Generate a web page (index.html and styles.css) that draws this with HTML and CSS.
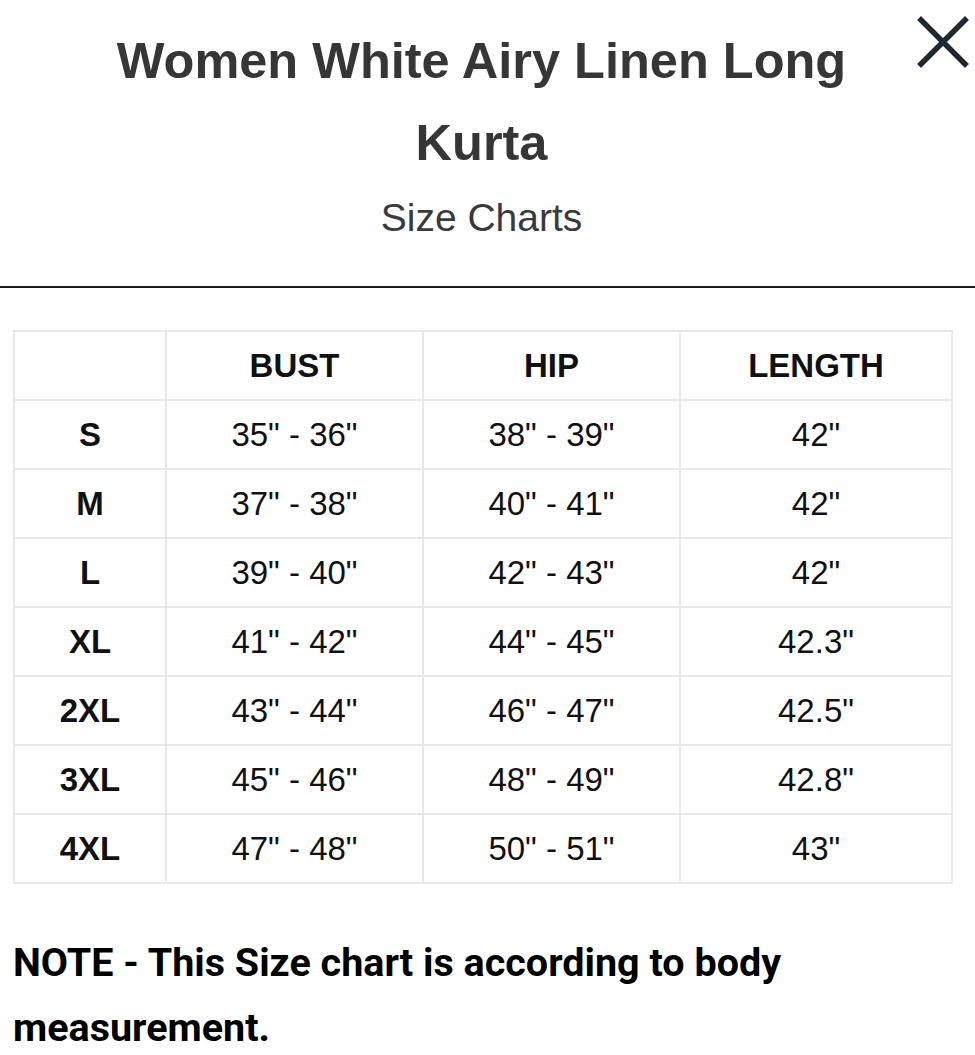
FILE: index.html
```html
<!DOCTYPE html>
<html lang="en">
<head>
<meta charset="utf-8">
<title>Size Charts</title>
<link rel="stylesheet" href="styles.css">
</head>
<body>
<div class="modal">
  <header class="head">
    <h1 class="title">Women White Airy Linen Long Kurta</h1>
    <p class="subtitle">Size Charts</p>
    <button class="close" aria-label="Close">
      <svg viewBox="0 0 52 52" width="52" height="52"><path d="M4 4 L48 48 M48 4 L4 48" stroke="#1f2830" stroke-width="5.5" stroke-linecap="square" fill="none"/></svg>
    </button>
  </header>
  <div class="divider"></div>
  <main class="content">
    <table class="chart">
      <thead>
        <tr><th></th><th>BUST</th><th>HIP</th><th>LENGTH</th></tr>
      </thead>
      <tbody>
        <tr><th>S</th><td>35" - 36"</td><td>38" - 39"</td><td>42"</td></tr>
        <tr><th>M</th><td>37" - 38"</td><td>40" - 41"</td><td>42"</td></tr>
        <tr><th>L</th><td>39" - 40"</td><td>42" - 43"</td><td>42"</td></tr>
        <tr><th>XL</th><td>41" - 42"</td><td>44" - 45"</td><td>42.3"</td></tr>
        <tr><th>2XL</th><td>43" - 44"</td><td>46" - 47"</td><td>42.5"</td></tr>
        <tr><th>3XL</th><td>45" - 46"</td><td>48" - 49"</td><td>42.8"</td></tr>
        <tr><th>4XL</th><td>47" - 48"</td><td>50" - 51"</td><td>43"</td></tr>
      </tbody>
    </table>
    <p class="note">NOTE - This Size chart is according to body measurement.</p>
  </main>
</div>
</body>
</html>
```
FILE: styles.css
```css
html, body {
  margin: 0;
  padding: 0;
  background: #fff;
}
.modal {
  width: 975px;
  font-family: "Liberation Sans", Arial, sans-serif;
}
.head {
  position: relative;
  padding: 20px 116px 0 104px;
  height: 266px;
  box-sizing: border-box;
  text-align: center;
}
.title {
  margin: 0;
  font-size: 50.5px;
  line-height: 82px;
  font-weight: 700;
  color: #363636;
}
.subtitle {
  margin: 12px 0 0;
  font-size: 39px;
  line-height: 44px;
  color: #3a3a3a;
}
.close {
  position: absolute;
  top: 16px;
  right: 6px;
  width: 52px;
  height: 52px;
  padding: 0;
  border: 0;
  background: none;
}
.close svg { display: block; }
.divider {
  height: 2px;
  background: #1a1a1a;
  margin-top: 20px;
}
.content {
  padding: 42px 22px 0 13px;
}
.chart {
  width: 940px;
  border-collapse: collapse;
  table-layout: fixed;
  color: #111;
  font-size: 33px;
}
.chart th, .chart td {
  border: 2px solid #e8e8e8;
  height: 67px;
  padding: 0;
  text-align: center;
  vertical-align: middle;
}
.chart th { font-weight: 700; }
.chart td { font-weight: 400; }
.chart th:nth-child(1) { width: 150px; }
.chart tr > :nth-child(2) { width: 255px; }
.chart tr > :nth-child(3) { width: 255px; }
.note {
  margin: 46px 0 0;
  font-family: Roboto, "Liberation Sans", sans-serif;
  font-weight: 700;
  font-size: 39.5px;
  line-height: 65px;
  color: #000;
  width: 820px;
}
```
